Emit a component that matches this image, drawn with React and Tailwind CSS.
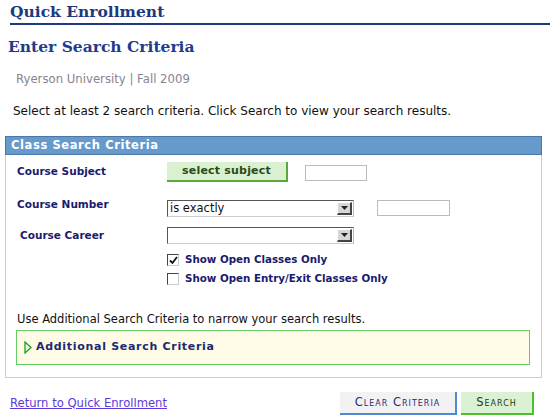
import React from 'react';

const sans = { fontFamily: 'Verdana, "DejaVu Sans", sans-serif' };
const serif = { fontFamily: '"DejaVu Serif", Georgia, serif' };

function SelectBox({ value, width }) {
  return (
    <div className={`flex items-center h-[17px] ${width} border border-t-[#555] border-l-[#555] border-r-[#bbb] border-b-[#ccc] bg-white`}>
      <span className="flex-1 pl-[2px] text-[11.5px] text-[#111] leading-none">{value}</span>
      <span className="w-[15px] h-[13px] mr-[1px] flex items-center justify-center bg-[#d6d6d6] border-r-2 border-b-2 border-[#444] border-t border-l border-t-[#fff] border-l-[#fff]">
        <svg width="7" height="4" viewBox="0 0 7 4"><path d="M0 0h7L3.5 4z" fill="#222" /></svg>
      </span>
    </div>
  );
}

function TextBox({ width }) {
  return <div className={`h-[16px] ${width} border border-[#bbb] bg-white`} />;
}

function Check({ checked, label }) {
  return (
    <div className="flex items-center gap-[6px] h-[12px]">
      <span className="w-[12px] h-[12px] border border-t-[#444] border-l-[#444] border-r-[#ccc] border-b-[#ccc] bg-white flex items-center justify-center">
        {checked && (
          <svg width="9" height="9" viewBox="0 0 9 9"><path d="M1 4.5l2.5 2.5L8 1" stroke="#111" strokeWidth="1.8" fill="none" /></svg>
        )}
      </span>
      <span className="text-[10.3px] font-bold text-[#1a1a6e]">{label}</span>
    </div>
  );
}

export default function App() {
  return (
    <div className="w-[550px] h-[420px] bg-white overflow-hidden relative" style={sans}>
      <div className="pl-[10px] pt-[2px]">
        <div className="text-[15.5px] leading-[20px] font-bold text-[#1d3a7e]" style={serif}>
          Quick Enrollment
        </div>
        <div className="h-[2px] bg-[#1d3a80] mt-[1px]" />
      </div>

      <div className="pl-[8px] pt-[12px] text-[15.5px] leading-[20px] font-bold text-[#1f3c8c]" style={serif}>
        Enter Search Criteria
      </div>

      <div className="pl-[16px] pt-[15px] text-[11.7px] leading-[14px] text-[#8a8290]">
        Ryerson University | Fall 2009
      </div>

      <div className="pl-[13px] pt-[18px] text-[12px] leading-[15px] text-[#111]">
        Select at least 2 search criteria. Click Search to view your search results.
      </div>

      <div className="ml-[5px] mt-[17px] w-[537px] h-[242px] border border-[#c8c8f0]">
        <div className="h-[19px] -mt-px -mx-px bg-[#6699cc] border border-[#4a76a8] flex items-center pl-[5px] text-[11.5px] font-bold text-white tracking-[0.6px]">
          Class Search Criteria
        </div>

        <div className="flex items-center mt-[7px] h-[20px]">
          <span className="w-[161px] pl-[11px] text-[10.5px] font-bold text-[#1a1a6e]">Course Subject</span>
          <span className="w-[121px] h-[20px] flex items-center justify-center bg-[#d9f0d1] border-r-2 border-b-2 border-[#5aa83a] text-[11px] font-bold text-[#2a4a18] tracking-[0.2px]">
            select subject
          </span>
          <span className="ml-[17px] mt-[2px]"><TextBox width="w-[62px]" /></span>
        </div>

        <div className="flex items-center mt-[18px] h-[17px]">
          <span className="w-[161px] pl-[11px] text-[10.5px] font-bold text-[#1a1a6e] mb-[8px]">Course Number</span>
          <SelectBox value="is exactly" width="w-[187px]" />
          <span className="ml-[23px] -mt-[2px]"><TextBox width="w-[73px]" /></span>
        </div>

        <div className="flex items-center mt-[10px] h-[17px]">
          <span className="w-[161px] pl-[14px] text-[10.5px] font-bold text-[#1a1a6e]">Course Career</span>
          <SelectBox value="" width="w-[187px]" />
        </div>

        <div className="pl-[161px] mt-[10px] flex flex-col gap-[7px]">
          <Check checked label="Show Open Classes Only" />
          <Check label="Show Open Entry/Exit Classes Only" />
        </div>

        <div className="pl-[11px] mt-[27px] text-[11.5px] leading-[14px] text-[#111]">
          Use Additional Search Criteria to narrow your search results.
        </div>

        <div className="ml-[10px] mt-[4px] w-[514px] h-[35px] bg-[#fffbe6] border border-[#66cc66] flex items-center pl-[7px] gap-[4px]">
          <svg width="8" height="13" viewBox="0 0 8 13"><path d="M1 1l6 5.5L1 12z" fill="#eaffea" stroke="#1aa31a" strokeWidth="1.3" /></svg>
          <span className="text-[11px] font-bold text-[#1a2a6e] tracking-[0.7px]">Additional Search Criteria</span>
        </div>
      </div>

      <div className="flex items-center mt-[14px] pl-[10px]">
        <span className="text-[11.6px] text-[#5a3ad8] underline w-[330px]">Return to Quick Enrollment</span>
        <span className="h-[23px] w-[117px] flex items-center justify-center bg-[#f2f2f2] border-r-2 border-b-2 border-[#4f8ad0] text-[11.5px] text-[#2a2a78] tracking-[1px] [font-variant:small-caps]">
          Clear Criteria
        </span>
        <span className="ml-[4px] h-[23px] w-[73px] flex items-center justify-center bg-[#daf1d4] border-r-2 border-b-2 border-[#4cc02a] text-[11.5px] text-[#233a12] tracking-[1px] [font-variant:small-caps]">
          Search
        </span>
      </div>
    </div>
  );
}
